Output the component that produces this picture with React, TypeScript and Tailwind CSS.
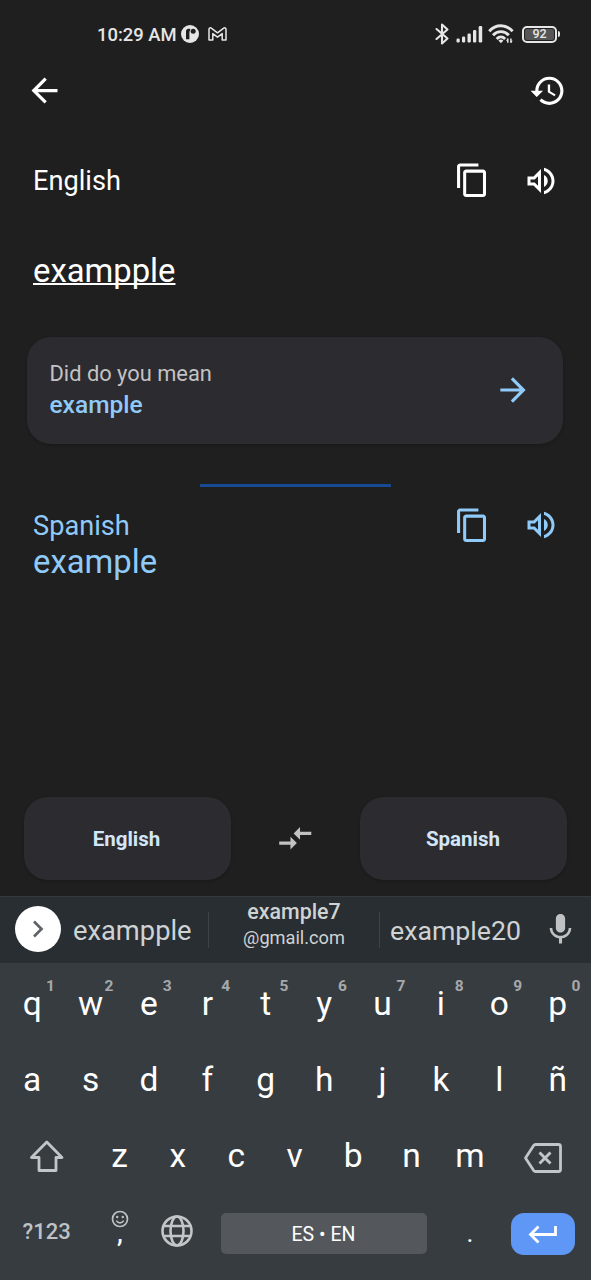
import type { ReactNode } from "react";

const ARROW_BACK = "M20 11H7.83l5.59-5.59L12 4l-8 8 8 8 1.41-1.41L7.83 13H20v-2z";
const ARROW_FORWARD = "M12 4l-1.41 1.41L16.17 11H4v2h12.17l-5.58 5.59L12 20l8-8-8-8z";
const HISTORY =
  "M13 3c-4.97 0-9 4.03-9 9H1l3.89 3.89.07.14L9 12H6c0-3.87 3.13-7 7-7s7 3.13 7 7-3.13 7-7 7c-1.93 0-3.68-.79-4.94-2.06l-1.42 1.42C8.27 19.99 10.51 21 13 21c4.97 0 9-4.03 9-9s-4.03-9-9-9zm-1 5v5l4.28 2.54.72-1.21-3.5-2.08V8H12z";
const COPY =
  "M16 1H4c-1.1 0-2 .9-2 2v14h2V3h12V1zm3 4H8c-1.1 0-2 .9-2 2v14c0 1.1.9 2 2 2h11c1.1 0 2-.9 2-2V7c0-1.1-.9-2-2-2zm0 16H8V7h11v14z";
const SPEAKER =
  "M3 9v6h4l5 5V4L7 9H3zm7-.17v6.34L7.83 13H5v-2h2.83L10 8.83zM16.5 12A4.5 4.5 0 0 0 14 7.97v8.05c1.48-.73 2.5-2.25 2.5-4.02zM14 3.23v2.06c2.89.86 5 3.54 5 6.71s-2.11 5.85-5 6.71v2.06c4.01-.91 7-4.49 7-8.77s-2.99-7.86-7-8.77z";
const SWAP =
  "M9.01 14H2v2h7.01v3L13 15l-3.99-4v3zm5.98-1v-3H22V8h-7.01V5L11 9l3.99 4z";
const MIC =
  "M12 14c1.66 0 2.99-1.34 2.99-3L15 5c0-1.66-1.34-3-3-3S9 3.34 9 5v6c0 1.66 1.34 3 3 3zm5.3-3c0 3-2.54 5.1-5.3 5.1S6.7 14 6.7 11H5c0 3.41 2.72 6.23 6 6.72V21h2v-3.28c3.28-.48 6-3.3 6-6.72h-1.7z";

function Icon({ d, className }: { d: string; className: string }) {
  return (
    <svg viewBox="0 0 24 24" fill="currentColor" className={`shrink-0 ${className}`}>
      <path d={d} />
    </svg>
  );
}

function StatusBar() {
  return (
    <div className="flex h-[68px] items-center pl-[97px] pr-[31px] text-[#e6e6e6]">
      <span className="w-[84px] whitespace-nowrap pt-[2px] text-[18.4px] font-medium leading-[24px]">10:29 AM</span>
      <svg viewBox="0 0 18 18" className="h-[18px] w-[18px]">
        <circle cx="9" cy="9" r="9" fill="currentColor" />
        <path d="M5 14.2V6.500Q5 3.800 7.600 3.800H9.200V5.200Q8.400 6 8.400 7.500V14.200z" fill="#1f1f1f" />
        <circle cx="12.200" cy="6.300" r="2.500" fill="#1f1f1f" />
      </svg>
      <svg viewBox="0 0 19 14" className="ml-[9px] h-[14px] w-[19px]" fill="none" stroke="currentColor" strokeWidth="1.5" strokeLinejoin="round">
        <path d="M1 2.3C1 1 2.6.4 3.6 1.3L9.5 5.8l5.9-4.5c1-.9 2.6-.3 2.6 1V13h-3.8V6.6l-4.7 3.6-4.7-3.6V13H1z" />
      </svg>
      <svg viewBox="0 0 14 22" className="ml-auto h-[22px] w-[14px]" fill="none" stroke="currentColor" strokeWidth="2.100" strokeLinejoin="round" strokeLinecap="round">
        <path d="M1.500 6l11 9.500L7 20.500v-19l5.500 5L1.500 16" />
      </svg>
      <svg viewBox="0 0 27 18" className="ml-[7px] h-[18px] w-[27px]" fill="currentColor">
        <rect x="0.500" y="13.500" width="3.200" height="4" rx="1.200" />
        <rect x="6" y="11.500" width="3.200" height="6" rx="1.200" />
        <rect x="11.500" y="8.500" width="3.300" height="9" rx="1.200" />
        <rect x="17" y="5" width="3.300" height="12.500" rx="1.200" />
        <rect x="22.700" y="1" width="3.500" height="16.500" rx="1.200" />
      </svg>
      <svg viewBox="0 0 26 20" className="ml-[5.500px] h-[20px] w-[26px]" fill="none" stroke="currentColor" strokeWidth="2.900">
        <path d="M1.200 7.200C8 -.1 17.800 -.1 24.600 7.200M5 11.200C9.500 6.400 16.300 6.400 20.800 11.200M8.700 14.900C11.200 12.200 14.600 12.200 17.100 14.900" />
        <path d="M10.400 16.500Q12.900 14.600 15.400 16.500L12.900 19.200z" fill="currentColor" stroke="none" />
        <path d="M19.800 14.500v4.300M22.900 14.500v4.300" strokeWidth="1.500" />
        <path d="M17.900 16.700l1.900-2.500v2.500zM24.800 16.700l-1.900 2.500v-2.500z" fill="currentColor" stroke="none" />
      </svg>
      <div className="ml-[8px] flex h-[17px] w-[35px] items-center justify-center rounded-[5px] border-2 border-[#e6e6e6] p-[1px]">
        <span className="flex h-full w-full items-center justify-center rounded-[2px] bg-[#555] pt-px text-[12.500px] font-medium leading-none">92</span>
      </div>
      <div className="ml-[1px] h-[6px] w-[2px] rounded-r bg-[#e6e6e6]" />
    </div>
  );
}

function LanguageActions() {
  return (
    <>
      <Icon d={COPY} className="ml-auto h-[36.600px] w-[36.600px]" />
      <Icon d={SPEAKER} className="ml-[32px] h-[36px] w-[36px]" />
    </>
  );
}

function Key({ label, hint }: { label: string; hint?: string }) {
  return (
    <div className="relative flex h-[76px] w-[58.400px] shrink-0 items-center justify-center pt-[2px] text-[33.500px] leading-[40px] text-white">
      {label}
      {hint && (
        <span className="absolute left-[37.500px] top-[12px] w-[20px] text-center text-[15.500px] font-bold leading-[18px] text-[#a6a9ab]">
          {hint}
        </span>
      )}
    </div>
  );
}

function SideKey({ children, className }: { children: ReactNode; className: string }) {
  return <div className={`flex h-[76px] shrink-0 items-center text-[#c3c6c8] ${className}`}>{children}</div>;
}

function Keyboard() {
  return (
    <div className="flex h-[384px] flex-col bg-[#373c40]">
      <div className="flex h-[67px] items-center border-t border-[#33393d] bg-[#282e32] pb-px text-[#d0d3d4]">
        <div className="mb-px ml-[15px] flex h-[46px] w-[46px] shrink-0 items-center justify-center rounded-full bg-white">
          <svg viewBox="0 0 12 18" className="h-[18px] w-[12px]" fill="none" stroke="#5f6368" strokeWidth="2.700">
            <path d="M2 1.500L9.500 9L2 16.500" />
          </svg>
        </div>
        <span className="ml-[12px] w-[135px] pt-[3px] text-[27.300px] leading-[32px]">exampple</span>
        <div className="h-[36px] w-px bg-[#3c4246]" />
        <div className="flex w-[170px] flex-col items-center pb-[10px] text-center">
          <span className="text-[21.400px] font-medium leading-[26px]">example7</span>
          <span className="text-[18.200px] leading-[25px]">@gmail.com</span>
        </div>
        <div className="h-[36px] w-px bg-[#3c4246]" />
        <span className="ml-[10px] w-[151.500px] pt-[3px] text-[26.700px] leading-[32px]">example20</span>
        <Icon d={MIC} className="h-[37px] w-[37px] text-[#bfc1c2]" />
      </div>
      <div className="flex pl-[3px] pt-[2px]">
        {"qwertyuiop".split("").map((k, i) => (
          <Key key={k} label={k} hint={String((i + 1) % 10)} />
        ))}
      </div>
      <div className="flex pl-[3px]">
        {"asdfghjklñ".split("").map((k) => (
          <Key key={k} label={k} />
        ))}
      </div>
      <div className="flex">
        <SideKey className="w-[90.300px] pl-[29px] pt-[2px]">
          <svg viewBox="0 0 36 34" className="h-[34px] w-[36px]" fill="none" stroke="currentColor" strokeWidth="2.800" strokeLinejoin="round">
            <path d="M17.800 3L33 18.500H27V31.500H10V18.500H2.500z" />
          </svg>
        </SideKey>
        {"zxcvbnm".split("").map((k) => (
          <Key key={k} label={k} />
        ))}
        <SideKey className="pl-[24px] pt-[6px]">
          <svg viewBox="0 0 40 32" className="h-[32px] w-[40px]" fill="none" stroke="currentColor" strokeWidth="2.800" strokeLinejoin="round">
            <path d="M12.500 2.500H35.500Q37.500 2.500 37.500 4.500V27.500Q37.500 29.500 35.500 29.500H12.500Q11.500 29.500 10.500 28.300L2.500 16L10.500 3.700Q11.500 2.500 12.500 2.500z" />
            <path d="M16.500 10.500L27.500 21.500M27.500 10.500L16.500 21.500" strokeWidth="2.900" />
          </svg>
        </SideKey>
      </div>
      <div className="flex h-[81px] items-center">
        <span className="w-[107.500px] pb-[4px] pl-[22.500px] text-[22px] font-medium leading-[28px] text-[#bfc2c4]">?123</span>
        <div className="flex w-[24px] flex-col items-center pb-[14px]">
          <svg viewBox="0 0 18 18" className="h-[18px] w-[18px] text-[#bfc2c4]" fill="none" stroke="currentColor" strokeWidth="1.700">
            <circle cx="9" cy="9" r="7.500" />
            <path d="M5.300 10.700Q9 15 12.700 10.700" />
            <circle cx="6.200" cy="7" r="1.200" fill="currentColor" stroke="none" />
            <circle cx="11.800" cy="7" r="1.200" fill="currentColor" stroke="none" />
          </svg>
          <span className="h-[15px] pl-px text-[26px] font-medium leading-[11px] text-white">,</span>
        </div>
        <svg viewBox="0 0 34 34" className="mb-[6px] ml-[28.500px] h-[34px] w-[34px] shrink-0 text-[#c3c6c8]" fill="none" stroke="currentColor" strokeWidth="2.600">
          <circle cx="17" cy="17" r="14.500" />
          <ellipse cx="17" cy="17" rx="6.500" ry="14.500" />
          <path d="M3 12H31M3 22H31" />
        </svg>
        <div className="ml-[26.500px] flex h-[41px] w-[206px] items-center justify-center rounded-[5px] bg-[#54585c] pt-[2px] text-[19.500px] leading-[24px] text-white">
          ES • EN
        </div>
        <span className="w-[84px] pb-[2px] pl-[40px] text-[26px] leading-[28px] text-white">.</span>
        <div className="flex h-[42px] w-[64px] items-center justify-center rounded-[13px] bg-[#5f97f6]">
          <svg viewBox="0 0 30 20" className="h-[20px] w-[30px]" fill="none" stroke="white" strokeWidth="2.800">
            <path d="M27.500 2V10.500H3M10.500 2.500L2.500 10.500L10.500 18.500" />
          </svg>
        </div>
      </div>
    </div>
  );
}

export default function App() {
  return (
    <div className="flex h-[1280px] w-[591px] flex-col overflow-hidden bg-[#1f1f1f] font-['Roboto',sans-serif] text-white">
      <StatusBar />
      <div className="flex h-[45px] items-center justify-between pl-[25px] pr-[24.800px]">
        <Icon d={ARROW_BACK} className="h-[39px] w-[39px]" />
        <Icon d={HISTORY} className="h-[37.600px] w-[37.600px]" />
      </div>
      <div className="mt-[45px] flex h-[45px] items-center pl-[33px] pr-[32.500px]">
        <span className="text-[27.200px] leading-[36px]">English</span>
        <LanguageActions />
      </div>
      <div className="mt-[48px] h-[40px] pl-[33px] text-[32.800px] leading-[40px]">
        <span className="underline decoration-[1.500px] underline-offset-[1px] [text-decoration-skip-ink:none]">exampple</span>
      </div>
      <div className="ml-[27px] mt-[46px] flex h-[107px] w-[536.400px] items-center rounded-[24px] bg-[#2c2b30] pl-[22.500px] pr-[31px] shadow-[0_1px_3px_rgba(0,0,0,0.25)]">
        <div className="flex flex-col pb-[3px]">
          <span className="text-[21.850px] leading-[31px] text-[#c3c2c4]">Did do you mean</span>
          <span className="pt-px text-[24.500px] font-medium leading-[30px] text-[#90caf9]">example</span>
        </div>
        <Icon d={ARROW_FORWARD} className="mb-px ml-auto h-[38px] w-[38px] text-[#90caf9]" />
      </div>
      <div className="ml-[200px] mt-[40px] h-[3px] w-[191px] bg-[#184a94]" />
      <div className="mt-[17px] flex h-[42px] items-center pl-[33px] pr-[32.500px] text-[#90caf9]">
        <span className="pt-[2px] text-[27.200px] leading-[36px]">Spanish</span>
        <LanguageActions />
      </div>
      <div className="h-[32px] pl-[33px] text-[32.800px] leading-[32px] text-[#90caf9]">example</div>
      <div className="mb-[16px] mt-auto flex h-[83px] items-center justify-between pl-[23.500px] pr-[24px] text-[20.500px] font-bold text-[#d3e6f7]">
        <div className="flex h-full w-[207px] items-center justify-center rounded-[24px] bg-[#2c2b30] pr-px pt-px shadow-[0_1px_3px_rgba(0,0,0,0.25)]">English</div>
        <Icon d={SWAP} className="mb-px h-[38.500px] w-[38.500px] text-[#c2c2c2]" />
        <div className="flex h-full w-[207px] items-center justify-center rounded-[24px] bg-[#2c2b30] pr-px pt-px shadow-[0_1px_3px_rgba(0,0,0,0.25)]">Spanish</div>
      </div>
      <Keyboard />
    </div>
  );
}
